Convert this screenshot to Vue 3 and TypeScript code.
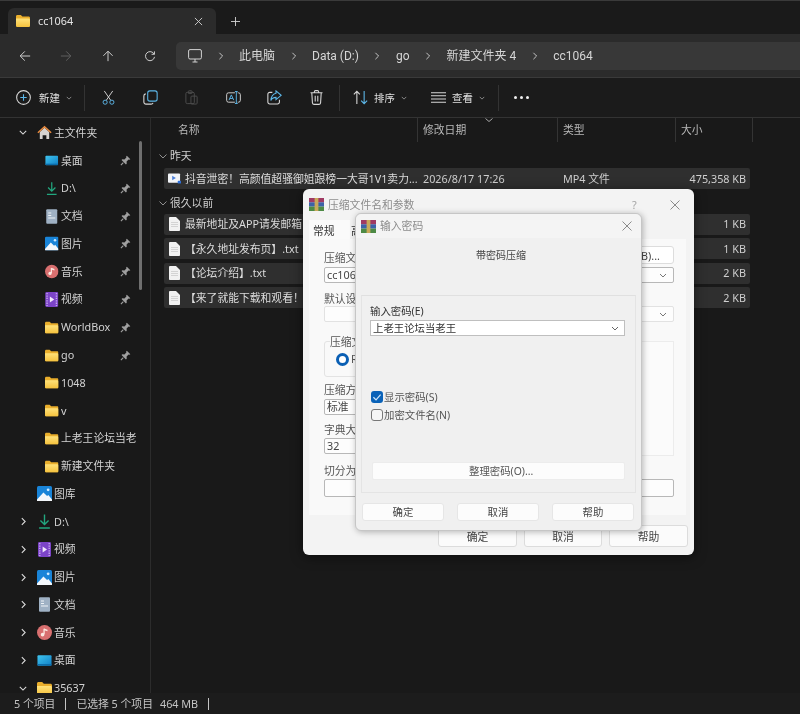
<script setup lang="ts">
interface NavItem {
  label: string
  icon: string
  level: 0 | 1
  arrow?: 'open' | 'closed'
  pinned?: boolean
}

interface FileRow {
  name: string
  icon: string
  date?: string
  type?: string
  size: string
}

const crumbs = ['此电脑', 'Data (D:)', 'go', '新建文件夹 4', 'cc1064']

const navItems: NavItem[] = [
  { label: '主文件夹', icon: 'home', level: 0, arrow: 'open' },
  { label: '桌面', icon: 'desktop', level: 1, pinned: true },
  { label: 'D:\\', icon: 'download', level: 1, pinned: true },
  { label: '文档', icon: 'doc', level: 1, pinned: true },
  { label: '图片', icon: 'picture', level: 1, pinned: true },
  { label: '音乐', icon: 'music', level: 1, pinned: true },
  { label: '视频', icon: 'video', level: 1, pinned: true },
  { label: 'WorldBox', icon: 'folder', level: 1, pinned: true },
  { label: 'go', icon: 'folder', level: 1, pinned: true },
  { label: '1048', icon: 'folder', level: 1 },
  { label: 'v', icon: 'folder', level: 1 },
  { label: '上老王论坛当老', icon: 'folder', level: 1 },
  { label: '新建文件夹', icon: 'folder', level: 1 },
  { label: '图库', icon: 'picture', level: 0 },
  { label: 'D:\\', icon: 'download', level: 0, arrow: 'closed' },
  { label: '视频', icon: 'video', level: 0, arrow: 'closed' },
  { label: '图片', icon: 'picture', level: 0, arrow: 'closed' },
  { label: '文档', icon: 'doc', level: 0, arrow: 'closed' },
  { label: '音乐', icon: 'music', level: 0, arrow: 'closed' },
  { label: '桌面', icon: 'desktop', level: 0, arrow: 'closed' },
  { label: '35637', icon: 'folder', level: 0, arrow: 'open' }
]

const recent: FileRow[] = [
  { name: '抖音泄密！高颜值超骚御姐跟榜一大哥1V1卖力...', icon: 'mp4', date: '2026/8/17 17:26', type: 'MP4 文件', size: '475,358 KB' }
]

const older: FileRow[] = [
  { name: '最新地址及APP请发邮箱自动获取.txt', icon: 'txt', size: '1 KB' },
  { name: '【永久地址发布页】.txt', icon: 'txt', size: '1 KB' },
  { name: '【论坛介绍】.txt', icon: 'txt', size: '2 KB' },
  { name: '【来了就能下载和观看！给你最好的】.txt', icon: 'txt', size: '2 KB' }
]

const groups = [
  { title: '昨天', rows: recent },
  { title: '很久以前', rows: older }
]

const columns = ['修改日期', '类型', '大小']
</script>

<template>
  <div class="window">
    <svg class="defs" width="0" height="0">
      <defs>
        <linearGradient id="g-folder" x1="0" y1="0" x2="0" y2="1">
          <stop offset="0" stop-color="#ffe27a" />
          <stop offset="1" stop-color="#f5c23e" />
        </linearGradient>
        <linearGradient id="g-blue" x1="0" y1="0" x2="1" y2="1">
          <stop offset="0" stop-color="#3fc4ee" />
          <stop offset="1" stop-color="#0f7fc6" />
        </linearGradient>
      </defs>
      <symbol id="i-folder" viewBox="0 0 14 12">
        <path d="M0 1.4C0 .6.6 0 1.4 0h3.4l1.6 1.6h6.2c.8 0 1.4.6 1.4 1.4v7.6c0 .8-.6 1.4-1.4 1.4H1.4C.6 12 0 11.4 0 10.6z" fill="#e9ae2c" />
        <path d="M0 3.6h12.6c.8 0 1.4.6 1.4 1.4v5.6c0 .8-.6 1.4-1.4 1.4H1.4C.6 12 0 11.4 0 10.6z" fill="url(#g-folder)" />
      </symbol>
      <symbol id="i-home" viewBox="0 0 16 16">
        <path d="M3 7.5 8 3l5 4.5V15h-3v-4H6v4H3z" fill="#d6d3d0" />
        <path d="M8 .8 15.600 7.600l-1 1.200L8 3 1.400 8.800l-1-1.200z" fill="#e98a3e" />
      </symbol>
      <symbol id="i-desktop" viewBox="0 0 16 12">
        <rect width="15" height="11" y=".5" x=".5" rx="1" fill="url(#g-blue)" />
        <rect width="15" height="1.500" y="9.800" x=".5" fill="#0b6ba8" />
      </symbol>
      <symbol id="i-download" viewBox="0 0 14 14">
        <path d="M7 .5v9M3.200 6 7 9.800 10.800 6M2 13h10" fill="none" stroke="#22a77f" stroke-width="1.300" />
      </symbol>
      <symbol id="i-doc" viewBox="0 0 12 15">
        <rect width="11" height="14.400" x=".5" y=".3" rx="1" fill="#9fb1c4" />
        <path d="M2.500 4h3M2.500 6.500h3M2.500 9h7" stroke="#eef2f6" stroke-width="1" />
      </symbol>
      <symbol id="i-picture" viewBox="0 0 14 14">
        <rect width="14" height="14" rx="1.400" fill="#1984d8" />
        <circle cx="10.400" cy="3.600" r="1.300" fill="#cfeaff" />
        <path d="M0 12.600 6 6l3.400 3.400 1.200-1L14 12.600V14H0z" fill="#f3f7fb" />
      </symbol>
      <symbol id="i-music" viewBox="0 0 14 14">
        <circle cx="7" cy="7" r="7" fill="#d86f6f" />
        <path d="M6.600 3.400v5.200" stroke="#fbe9e2" stroke-width="1.200" />
        <path d="M6.600 3.200 9.800 4.400v1.500L6.600 4.800z" fill="#fbe9e2" />
        <circle cx="5.200" cy="9" r="1.700" fill="#fbe9e2" />
      </symbol>
      <symbol id="i-video" viewBox="0 0 13 15">
        <rect width="13" height="15" rx="1.400" fill="#7c44c8" />
        <path d="M1.800 1v13M11.200 1v13" stroke="#c7a6f0" stroke-width="1.400" stroke-dasharray="1.300 1.100" />
        <path d="M4.600 4.600 9 7.500l-4.400 2.900z" fill="#f0e7fb" />
      </symbol>
      <symbol id="i-txt" viewBox="0 0 11 14">
        <path d="M0 .8C0 .4.4 0 .8 0H7l4 4v9.200c0 .4-.4.8-.8.8H.8c-.4 0-.8-.4-.8-.8z" fill="#f1f1f1" />
        <path d="M2 5.500h7M2 7.500h7M2 9.500h7" stroke="#c6c6c6" stroke-width=".7" />
      </symbol>
      <symbol id="i-mp4" viewBox="0 0 14 12">
        <rect width="13" height="10" y=".5" rx="1" fill="#f2f4f8" />
        <path d="M4.500 3 8.500 5.500 4.500 8z" fill="#4c7fd8" />
        <rect x="10.500" y="8.500" width="3.500" height="3" rx=".6" fill="#2e6fd8" />
      </symbol>
      <symbol id="i-rar" viewBox="0 0 15 13">
        <rect width="15" height="4.400" fill="#a03a63" />
        <rect width="15" height="4.300" y="4.300" fill="#3d62a8" />
        <rect width="15" height="4.400" y="8.600" fill="#4d8a45" />
        <rect x="5.600" width="3.800" height="13" fill="#c9a95a" />
      </symbol>
    </svg>

    <div class="tabbar">
      <div class="tab">
        <svg class="tab-icon"><use href="#i-folder" /></svg>
        <span class="tab-title">cc1064</span>
        <svg class="tab-close" viewBox="0 0 10 10"><path d="M1 1l8 8M9 1l-8 8" /></svg>
      </div>
      <svg class="tab-add" viewBox="0 0 10 10"><path d="M5 0v10M0 5h10" /></svg>
    </div>

    <div class="navbar">
      <div class="nav-btns">
        <svg viewBox="0 0 14 14" class="nav-ico"><path d="M13 7H1.500M6.800 1.600 1.400 7l5.400 5.400" /></svg>
        <svg viewBox="0 0 14 14" class="nav-ico off"><path d="M1 7h11.500M7.200 1.600 12.600 7l-5.400 5.400" /></svg>
        <svg viewBox="0 0 14 14" class="nav-ico"><path d="M7 13V1.500M1.600 6.800 7 1.400l5.400 5.400" /></svg>
        <svg viewBox="0 0 14 14" class="nav-ico"><path d="M11.900 5A5.300 5.300 0 1 0 12.300 8M12.200 1.600V5H8.800" /></svg>
      </div>
      <div class="address">
        <svg viewBox="0 0 14 14" class="pc-ico"><rect x=".6" y=".6" width="12.800" height="9.400" rx="1.400" /><path d="M4.500 13h5M7 10v3" /></svg>
        <template v-for="c in crumbs" :key="c">
          <svg viewBox="0 0 6 10" class="crumb-sep"><path d="M1 1l4 4-4 4" /></svg>
          <span class="crumb">{{ c }}</span>
        </template>
      </div>
    </div>

    <div class="toolbar">
      <div class="tool-new">
        <svg viewBox="0 0 14 14" class="tool-ico plain"><circle cx="7" cy="7" r="6.400" /><path d="M7 4v6M4 7h6" stroke="#5db8ea" /></svg>
        <span class="tool-text">新建</span>
        <svg viewBox="0 0 8 5" class="tool-chev"><path d="M1 1l3 3 3-3" /></svg>
      </div>
      <i class="tool-sep" />
      <div class="tool-icons">
        <svg viewBox="0 0 14 16" class="tool-ico blue"><path d="M2.500 1 9.400 11M11.500 1 4.600 11" stroke="#d8d8d8" /><circle cx="3.400" cy="13" r="2.200" /><circle cx="10.600" cy="13" r="2.200" /></svg>
        <svg viewBox="0 0 14 14" class="tool-ico blue"><rect x="4.400" y=".8" width="8.800" height="9.600" rx="2" /><path d="M2.600 3.600A2 2 0 0 0 .8 5.600v5.600a2 2 0 0 0 2 2h4.800a2 2 0 0 0 1.800-1.200" stroke="#d8d8d8" /></svg>
        <svg viewBox="0 0 14 16" class="tool-ico dim"><rect x="1" y="2.500" width="9" height="12" rx="1.400" /><rect x="3.600" y=".8" width="4" height="3" rx=".8" /><rect x="6.400" y="6.500" width="6.600" height="8.500" rx="1" /></svg>
        <svg viewBox="0 0 16 14" class="tool-ico plain"><path d="M9.500 2H2.700a2 2 0 0 0-2 2v6a2 2 0 0 0 2 2h6.800M12.500 2h.8a2 2 0 0 1 2 2v6a2 2 0 0 1-2 2h-.8" /><path d="M3.200 9.800 5.700 4.200l2.500 5.600M4.200 8h3" stroke="#5db8ea" /><path d="M11 .6v12.800M9.500.6h3M9.500 13.400h3" stroke="#5db8ea" /></svg>
        <svg viewBox="0 0 14 14" class="tool-ico plain"><path d="M5 2.200H2.600A1.800 1.800 0 0 0 .8 4v7.200A1.800 1.800 0 0 0 2.600 13h7.200a1.800 1.800 0 0 0 1.800-1.800V9" /><path d="M8.400.9 13.200 5 8.400 9V6.900C6 6.900 4.400 7.900 3.600 9.900 3.800 6.400 5.400 3.900 8.400 3.100z" stroke="#5db8ea" /></svg>
        <svg viewBox="0 0 12 14" class="tool-ico plain"><path d="M.4 2.600h11.200M4 2.400V1.600C4 1 4.400.6 5 .6h2c.6 0 1 .4 1 1v.8M1.600 2.600l.6 9.400c0 .8.600 1.400 1.400 1.400h4.800c.8 0 1.400-.6 1.400-1.400l.6-9.400M4.800 5.400v5.400M7.200 5.400v5.400" /></svg>
      </div>
      <i class="tool-sep" />
      <div class="tool-menu sort">
        <svg viewBox="0 0 14 14" class="tool-ico plain"><path d="M3.600 13V1.200M.8 4 3.600 1.200 6.400 4" /><path d="M10.400 1v11.800M7.600 10l2.800 2.800L13.200 10" stroke="#5db8ea" /></svg>
        <span class="tool-text">排序</span>
        <svg viewBox="0 0 8 5" class="tool-chev"><path d="M1 1l3 3 3-3" /></svg>
      </div>
      <div class="tool-menu view">
        <svg viewBox="0 0 14 10" class="tool-ico plain"><path d="M0 .6h14M0 3.400h14M0 6.400h14M0 9.400h14" /></svg>
        <span class="tool-text">查看</span>
        <svg viewBox="0 0 8 5" class="tool-chev"><path d="M1 1l3 3 3-3" /></svg>
      </div>
      <i class="tool-sep" />
      <div class="tool-more"><b /><b /><b /></div>
    </div>

    <div class="main">
      <aside class="sidebar">
        <div v-for="(item, i) in navItems" :key="i" class="nav-row" :class="'level-' + item.level">
          <span class="nav-arrow">
            <svg v-if="item.arrow === 'open'" viewBox="0 0 10 6"><path d="M1 1l4 4 4-4" /></svg>
            <svg v-else-if="item.arrow === 'closed'" class="side" viewBox="0 0 6 10"><path d="M1 1l4 4-4 4" /></svg>
          </span>
          <span class="nav-icon"><svg><use :href="'#i-' + item.icon" /></svg></span>
          <span class="nav-label">{{ item.label }}</span>
          <svg v-if="item.pinned" class="pin" viewBox="0 0 10 10"><path d="M6.200.6 9.400 3.800 8.600 4.400 7.800 4.200 6 6l.1 1.900-.7.7-4-4 .7-.7L4 4l1.800-1.800-.2-.9z" /><path d="M3 7 .8 9.200" stroke="#a0a0a0" stroke-width="1" /></svg>
        </div>
        <div class="side-scroll" />
      </aside>

      <section class="files">
        <div class="head">
          <span class="col-name">名称</span>
          <span v-for="c in columns" :key="c" class="col" :class="'col-' + c">{{ c }}</span>
          <svg class="sort-mark" viewBox="0 0 8 4"><path d="M.5.5 4 3.500 7.500.5" /></svg>
        </div>
        <div v-for="g in groups" :key="g.title" class="group">
          <div class="group-title">
            <svg viewBox="0 0 8 5"><path d="M.5.5 4 4 7.500.5" /></svg>
            <span>{{ g.title }}</span>
          </div>
          <div v-for="r in g.rows" :key="r.name" class="file-row">
            <span class="file-icon" :class="r.icon"><svg><use :href="'#i-' + r.icon" /></svg></span>
            <span class="file-name">{{ r.name }}</span>
            <span class="file-date">{{ r.date }}</span>
            <span class="file-type">{{ r.type }}</span>
            <span class="file-size">{{ r.size }}</span>
          </div>
        </div>
      </section>
    </div>

    <footer class="status">
      <span>5 个项目</span>
      <i class="status-sep" />
      <span>已选择 5 个项目</span>
      <span class="status-size">464 MB</span>
      <i class="status-sep" />
    </footer>

    <div class="dlg dlg-back">
      <div class="dlg-title">
        <svg class="rar"><use href="#i-rar" /></svg>
        <span class="dlg-name">压缩文件名和参数</span>
        <span class="dlg-help">?</span>
        <svg class="dlg-x" viewBox="0 0 10 10"><path d="M.5.5l9 9M9.500.5l-9 9" /></svg>
      </div>
      <div class="back-tabs">
        <span class="back-tab on">常规</span>
        <span class="back-tab">高级</span>
      </div>
      <div class="back-panel">
        <div class="row-top">
          <span class="row-label">压缩文件名(A)</span>
          <span class="mini-btn">浏览(B)...</span>
        </div>
        <div class="box lined combo">cc1064.rar<svg viewBox="0 0 8 5"><path d="M1 1l3 3 3-3" /></svg></div>
        <div class="label gap1">默认设置</div>
        <div class="box combo">&nbsp;<svg viewBox="0 0 8 5"><path d="M1 1l3 3 3-3" /></svg></div>
        <div class="back-cols">
          <div class="back-left">
            <div class="fmt">
              <span class="fmt-title">压缩文件格式</span>
              <span class="radio-row"><i class="radio" />RAR</span>
            </div>
            <div class="label l-a">压缩方式(M)</div>
            <div class="box lined">标准</div>
            <div class="label l-b">字典大小(I)</div>
            <div class="box lined">32</div>
          </div>
          <div class="back-right" />
        </div>
        <div class="label l-c">切分为分卷(V)</div>
        <div class="box lined tall" />
      </div>
      <div class="back-btns">
        <span>确定</span>
        <span>取消</span>
        <span>帮助</span>
      </div>
    </div>

    <div class="dlg dlg-front">
      <div class="dlg-title front">
        <svg class="rar"><use href="#i-rar" /></svg>
        <span class="dlg-name">输入密码</span>
        <svg class="dlg-x" viewBox="0 0 10 10"><path d="M.5.5l9 9M9.500.5l-9 9" /></svg>
      </div>
      <div class="front-head">带密码压缩</div>
      <div class="front-panel">
        <div class="pw-label">输入密码(E)</div>
        <div class="pw-box">上老王论坛当老王<svg viewBox="0 0 8 5"><path d="M1 1l3 3 3-3" /></svg></div>
        <label class="check first"><i class="tick"><svg viewBox="0 0 10 10"><path d="M2 5.200 4.200 7.400 8 3" /></svg></i>显示密码(S)</label>
        <label class="check"><i class="tick off" />加密文件名(N)</label>
        <div class="manage">整理密码(O)...</div>
      </div>
      <div class="front-btns">
        <span>确定</span>
        <span>取消</span>
        <span>帮助</span>
      </div>
    </div>
  </div>
</template>

<style scoped>
.window {
  position: relative;
  width: 800px;
  height: 714px;
  overflow: hidden;
  display: flex;
  flex-direction: column;
  background: #191919;
  color: #d6d6d6;
  font: 10.8px/16px "Noto Sans", "Noto Sans CJK SC", sans-serif;
  border-top: 1px solid #3a3a3a;
  box-sizing: border-box;
  filter: blur(0.35px);
}
.defs {
  position: absolute;
}

/* tab strip */
.tabbar {
  height: 33px;
  flex: none;
  display: flex;
  align-items: flex-end;
  padding-left: 8px;
  background: #1a1a1a;
}
.tab {
  width: 208px;
  height: 26px;
  box-sizing: border-box;
  display: flex;
  align-items: center;
  padding: 0 13px 0 8px;
  background: #2b2b2b;
  border-radius: 6px 6px 0 0;
}
.tab-icon {
  width: 14px;
  height: 12px;
  margin-right: 8px;
}
.tab-title {
  flex: 1;
  color: #e4e4e4;
}
.tab-close {
  width: 9px;
  height: 9px;
}
.tab-close path,
.tab-add path {
  stroke: #d4d4d4;
  stroke-width: 1;
  fill: none;
}
.tab-add {
  width: 9px;
  height: 9px;
  margin: 0 0 8px 15px;
}

/* address row */
.navbar {
  height: 44px;
  flex: none;
  display: flex;
  align-items: center;
  background: #2b2b2b;
  border-bottom: 1px solid #3a3a3a;
  box-sizing: border-box;
}
.nav-btns {
  width: 176px;
  flex: none;
  display: flex;
  padding-left: 4px;
  box-sizing: border-box;
}
.nav-ico {
  width: 12px;
  height: 12px;
  margin: 0 14.8px;
  flex: none;
}
.nav-ico path {
  fill: none;
  stroke: #d6d6d6;
  stroke-width: 1.1;
}
.nav-ico.off path {
  stroke: #636363;
}
.address {
  flex: 1;
  height: 28px;
  display: flex;
  align-items: center;
  gap: 15.5px;
  padding-left: 12px;
  background: #383838;
  border-radius: 5px 0 0 5px;
}
.pc-ico {
  width: 14px;
  height: 14px;
}
.pc-ico rect,
.pc-ico path {
  fill: none;
  stroke: #d2d2d2;
  stroke-width: 1;
}
.crumb-sep {
  width: 6px;
  height: 8px;
  flex: none;
}
.crumb-sep path {
  fill: none;
  stroke: #d8d8d8;
  stroke-width: 1.1;
}
.crumb {
  font-family: Roboto, "Noto Sans CJK SC", sans-serif;
  font-size: 12px;
  color: #d6d6d6;
  white-space: nowrap;
}

/* command bar */
.toolbar {
  height: 40px;
  flex: none;
  display: flex;
  align-items: center;
  padding-left: 16px;
  background: #1b1b1b;
  border-bottom: 1px solid #333;
  box-sizing: border-box;
}
.tool-new {
  width: 68px;
  display: flex;
  align-items: center;
}
.tool-text {
  margin: 0 6px 0 8px;
  color: #e0e0e0;
  font-size: 10.4px;
}
.tool-chev {
  width: 6px;
  height: 4px;
}
.tool-chev path {
  fill: none;
  stroke: #a8a8a8;
}
.tool-sep {
  width: 1px;
  height: 26px;
  background: #333;
  flex: none;
}
.tool-ico {
  width: 15px;
  height: 15px;
  flex: none;
  fill: none;
  stroke: #d8d8d8;
  stroke-width: 1;
}
.tool-ico.blue {
  stroke: #5db8ea;
}
.tool-ico.dim {
  stroke: #4d4d4d;
}
.tool-icons {
  width: 254px;
  display: flex;
  justify-content: space-between;
  padding: 0 15px 0 16px;
  box-sizing: border-box;
  flex: none;
}
.tool-menu {
  display: flex;
  align-items: center;
}
.tool-menu .tool-text {
  margin-left: 6px;
}
.sort {
  margin-left: 13px;
  width: 78px;
}
.view {
  width: 67px;
}
.tool-more {
  display: flex;
  gap: 3px;
  margin-left: 15px;
}
.tool-more b {
  width: 3px;
  height: 3px;
  border-radius: 50%;
  background: #f0f0f0;
}

/* body */
.main {
  flex: 1;
  min-height: 0;
  display: flex;
  overflow: hidden;
  background: #191919;
}
.sidebar {
  position: relative;
  width: 151px;
  flex: none;
  padding-top: 1px;
  box-sizing: border-box;
  border-right: 1px solid #2c2c2c;
  overflow: hidden;
}
.nav-row {
  height: 27.77px;
  display: flex;
  align-items: center;
  white-space: nowrap;
  color: #d2d2d2;
}
.nav-arrow {
  width: 37px;
  padding-left: 19px;
  box-sizing: border-box;
  flex: none;
  display: flex;
  align-items: center;
}
.nav-arrow svg {
  width: 8px;
  height: 5px;
  fill: none;
  stroke: #dcdcdc;
  stroke-width: 1.3;
}
.nav-arrow svg.side {
  width: 5px;
  height: 9px;
  margin-left: 2px;
}
.nav-icon {
  width: 14px;
  height: 15px;
  margin-right: 3px;
  flex: none;
  display: flex;
  align-items: center;
}
.nav-icon svg {
  width: 15px;
  height: 15px;
  flex: none;
}
.level-1 .nav-icon {
  margin-left: 8px;
  margin-right: 2px;
}
.level-1 .nav-icon svg {
  width: 13.5px;
}
.nav-label {
  flex: none;
}
.pin {
  position: absolute;
  left: 120px;
  width: 11px;
  height: 11px;
  fill: #a0a0a0;
}
.side-scroll {
  position: absolute;
  left: 139px;
  top: 23px;
  width: 3px;
  height: 149px;
  border-radius: 2px;
  background: #6f6f6f;
}

/* file list */
.files {
  flex: 1;
  min-width: 0;
  padding-right: 50px;
  box-sizing: border-box;
}
.head {
  position: relative;
  height: 24px;
  margin-bottom: 2px;
  display: flex;
  align-items: center;
  padding-left: 27px;
  color: #b8b8b8;
}
.col-name {
  width: 239px;
  flex: none;
}
.col {
  flex: none;
  height: 24px;
  line-height: 24px;
  padding-left: 5px;
  box-sizing: border-box;
  border-left: 1px solid #343434;
}
.col-修改日期 {
  width: 140px;
}
.col-类型 {
  width: 118px;
}
.col-大小 {
  width: 78px;
  border-right: 1px solid #343434;
}
.sort-mark {
  position: absolute;
  left: 334px;
  top: 0;
  width: 8px;
  height: 4px;
  fill: none;
  stroke: #a8a8a8;
}
.group-title {
  height: 24px;
  display: flex;
  align-items: center;
  padding-left: 8px;
  gap: 3px;
  color: #cfcfcf;
}
.group + .group .group-title {
  height: 21px;
}
.group-title svg {
  width: 8px;
  height: 5px;
  fill: none;
  stroke: #909090;
}
.file-row {
  height: 21px;
  margin: 0 0 3.6px 13px;
  display: flex;
  align-items: center;
  background: #2f2f2f;
  border-radius: 2px;
  white-space: nowrap;
  overflow: hidden;
}
.file-icon {
  width: 21px;
  flex: none;
  display: flex;
  justify-content: center;
}
.file-icon svg {
  width: 13px;
  height: 13px;
}
.file-icon.txt svg {
  width: 11px;
  height: 14px;
}
.file-name {
  width: 238px;
  flex: none;
  overflow: hidden;
  color: #dcdcdc;
}
.file-date {
  width: 140px;
  flex: none;
  color: #cfcfcf;
}
.file-type {
  width: 100px;
  flex: none;
  color: #cfcfcf;
}
.file-size {
  flex: 1;
  padding-right: 4px;
  text-align: right;
  color: #cfcfcf;
}

/* status bar */
.status {
  height: 21px;
  flex: none;
  display: flex;
  align-items: center;
  padding-left: 14px;
  background: #1c1c1c;
  color: #c4c4c4;
}
.status-sep {
  width: 1px;
  height: 12px;
  margin: 0 10px;
  background: #c4c4c4;
}
.status-size {
  margin-left: 7px;
}

/* dialogs */
.dlg {
  position: absolute;
  box-sizing: border-box;
  color: #333;
  border-radius: 6px;
  display: flex;
  flex-direction: column;
}
.dlg-back {
  left: 303px;
  top: 188px;
  width: 391px;
  height: 366px;
  background: #f3f3f3;
  box-shadow: 0 2px 12px rgba(0, 0, 0, 0.5);
}
.dlg-front {
  left: 355px;
  top: 212px;
  width: 287px;
  height: 318px;
  background: #f0f0f0;
  border: 1px solid #c6c6c6;
  box-shadow: 1px 1px 6px rgba(0, 0, 0, 0.28);
}
.dlg-title {
  height: 31px;
  flex: none;
  display: flex;
  align-items: center;
  padding-left: 6px;
}
.dlg-title.front {
  height: 24px;
  background: #f4f4f4;
  border-radius: 6px 6px 0 0;
  padding-left: 5px;
}
.rar {
  width: 15px;
  height: 13px;
  margin-right: 4px;
  flex: none;
}
.dlg-name {
  flex: 1;
  color: #8c8c8c;
}
.dlg-help {
  width: 38px;
  color: #a4a4a4;
}
.dlg-x {
  width: 10px;
  height: 10px;
  margin-right: 14px;
  flex: none;
  fill: none;
  stroke: #8a8a8a;
}
.front .dlg-x {
  margin-right: 9px;
}
.back-tabs {
  height: 19px;
  flex: none;
  display: flex;
  padding-left: 6px;
}
.back-tab {
  width: 41px;
  box-sizing: border-box;
  line-height: 21px;
  padding-left: 1px;
  color: #333;
}
.back-tab.on {
  padding-left: 4px;
  background: #fafafa;
}
.back-panel {
  height: 276px;
  flex: none;
  margin: 0 8px 0 6px;
  padding: 7px 12px 0 15px;
  box-sizing: border-box;
  background: #f9f9f9;
  color: #555;
}
.row-top {
  height: 18px;
  display: flex;
  justify-content: space-between;
  margin-bottom: 3px;
}
.row-label {
  line-height: 24px;
}
.mini-btn {
  width: 75px;
  height: 18px;
  line-height: 17px;
  text-align: right;
  padding-right: 13px;
  box-sizing: border-box;
  background: #fff;
  border: 1px solid #ddd;
  border-radius: 3px;
  color: #444;
}
.box {
  position: relative;
  height: 16px;
  line-height: 14px;
  padding-left: 2px;
  box-sizing: border-box;
  background: #fdfdfd;
  border: 1px solid #e2e2e2;
  border-radius: 2px;
  white-space: nowrap;
  overflow: hidden;
  color: #444;
}
.box.lined {
  border-color: #b8b8b8;
}
.box.tall {
  height: 18px;
}
.combo svg {
  position: absolute;
  right: 6px;
  top: 5px;
  width: 8px;
  height: 5px;
  fill: none;
  stroke: #777;
}
.label {
  height: 14px;
  line-height: 14px;
  white-space: nowrap;
}
.gap1 {
  margin-top: 9px;
}
.back-cols {
  display: flex;
  justify-content: space-between;
  margin-top: 19px;
}
.back-left {
  width: 170px;
}
.back-right {
  width: 174px;
  height: 115px;
  background: #fbfbfb;
  border: 1px solid #ececec;
  box-sizing: border-box;
}
.fmt {
  height: 36px;
  padding-left: 5px;
  box-sizing: border-box;
  border: 1px solid #e3e3e3;
  border-radius: 3px;
  position: relative;
}
.fmt-title {
  display: block;
  margin-top: -8px;
  background: #f9f9f9;
  width: 80px;
  white-space: nowrap;
}
.radio-row {
  display: flex;
  align-items: center;
  gap: 2px;
  margin: 1px 0 0 6px;
}
.radio {
  width: 7px;
  height: 7px;
  border: 3px solid #0a5fb4;
  border-radius: 50%;
  background: #fff;
}
.l-a {
  margin-top: 6px;
  margin-bottom: 2px;
}
.l-b {
  margin-top: 8px;
  margin-bottom: 1px;
}
.l-c {
  margin-top: 8px;
  margin-bottom: 1px;
}
.back-btns {
  display: flex;
  justify-content: flex-end;
  gap: 7px;
  padding: 10px 6px 0 0;
}
.back-btns span {
  width: 79px;
  height: 22px;
  line-height: 22px;
  text-align: center;
  box-sizing: border-box;
  background: #fbfbfb;
  border: 1px solid #dcdcdc;
  border-radius: 3px;
  color: #444;
}
.back-btns span:nth-child(2) {
  width: 78px;
}
.front-head {
  height: 57px;
  flex: none;
  padding: 9px 0 0 120px;
  box-sizing: border-box;
  font-size: 10px;
  color: #444;
}
.front-panel {
  height: 198px;
  flex: none;
  margin: 0 5px;
  padding: 7px 8px 0;
  box-sizing: border-box;
  border: 1px solid #e4e4e4;
  border-top-color: #e0e0e0;
}
.pw-label {
  height: 17px;
  line-height: 16px;
  color: #333;
  font-size: 10.4px;
}
.pw-box {
  position: relative;
  height: 16px;
  margin-right: 2px;
  line-height: 14px;
  padding-left: 2px;
  box-sizing: border-box;
  background: #fff;
  border: 1px solid #bfbfbf;
  font-size: 10.4px;
}
.pw-box svg {
  position: absolute;
  right: 5px;
  top: 5px;
  width: 8px;
  height: 5px;
  fill: none;
  stroke: #666;
}
.check {
  display: flex;
  align-items: center;
  gap: 1px;
  height: 14px;
  margin: 4px 0 0 1px;
  color: #555;
  font-size: 10.4px;
}
.check.first {
  margin-top: 54px;
}
.tick {
  width: 12px;
  height: 12px;
  box-sizing: border-box;
  border-radius: 3px;
  background: #0a62b8;
  display: flex;
}
.tick svg {
  width: 12px;
  height: 12px;
  fill: none;
  stroke: #cfe6fa;
  stroke-width: 1;
}
.tick.off {
  background: #f6f6f6;
  border: 1px solid #777;
}
.manage {
  height: 18px;
  margin: 40px 2px 0 2px;
  line-height: 17px;
  padding-left: 96px;
  box-sizing: border-box;
  background: #fcfcfc;
  border: 1px solid #ececec;
  border-radius: 2px;
  font-size: 10.4px;
  color: #555;
}
.front-btns {
  display: flex;
  justify-content: space-between;
  padding: 10px 7px 0 6px;
}
.front-btns span {
  width: 82px;
  height: 18px;
  line-height: 17px;
  text-align: center;
  box-sizing: border-box;
  background: #fcfcfc;
  border: 1px solid #e6e6e6;
  border-radius: 3px;
  font-size: 10.4px;
  color: #444;
}
</style>

<style>
html,
body {
  margin: 0;
  background: #111;
}
</style>
